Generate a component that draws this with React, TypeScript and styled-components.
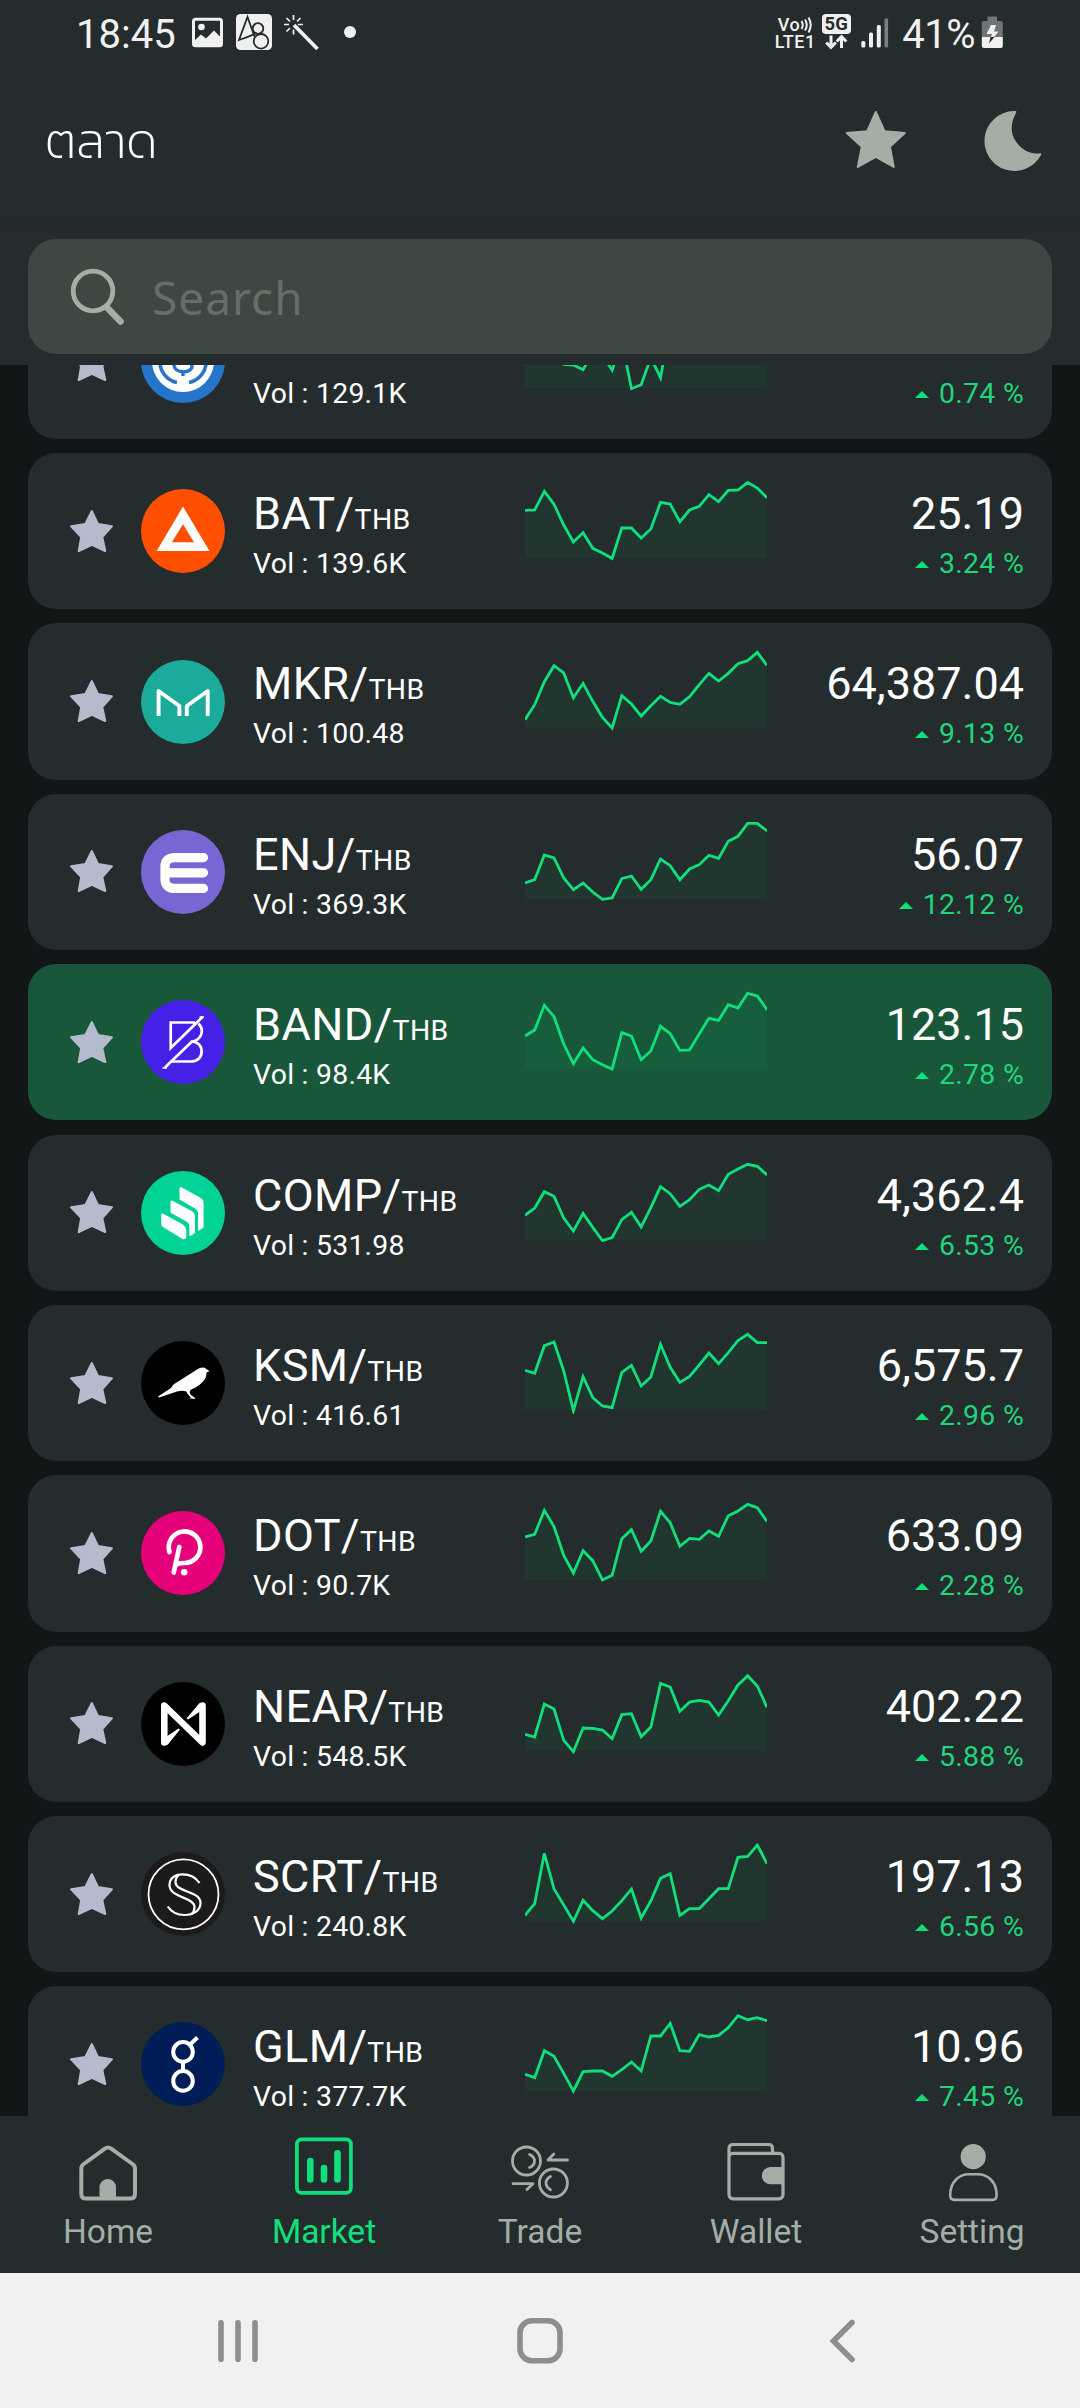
import React from 'react';
import styled, { createGlobalStyle } from 'styled-components';

const c = {
  surface: '#252c2e',
  backdrop: '#121616',
  field: '#3f4743',
  muted: '#a4aea7',
  star: '#b5bacd',
  green: '#0ee17b',
  active: '#19573b',
};

const GlobalStyle = createGlobalStyle`
  * { box-sizing: border-box; }
  body { margin: 0; background: ${c.backdrop}; font-family: Roboto, "Noto Sans", "Liberation Sans", sans-serif; }
  svg { display: block; flex: none; }
`;

const Screen = styled.div`
  width: 1080px;
  height: 2408px;
  display: flex;
  flex-direction: column;
  overflow: hidden;
  background: ${c.backdrop};
`;

const StatusBar = styled.div`
  height: 66px;
  flex: none;
  display: flex;
  justify-content: space-between;
  align-items: flex-start;
  padding: 0 77px 0 76px;
  background: ${c.surface};
  color: #f0f0f0;
`;

const StatusGroup = styled.div`
  display: flex;
  align-items: flex-start;
`;

const StatusText = styled.span<{ $tight?: boolean }>`
  font-size: 40px;
  line-height: 47px;
  padding-top: 11px;
  letter-spacing: ${(p) => (p.$tight ? '-0.5px' : '0')};
`;

const Network = styled.div`
  display: flex;
  flex-direction: column;
  padding-top: 16px;
  font-size: 18px;
  font-weight: 500;
  line-height: 17px;
  letter-spacing: 0.5px;
`;

const Volte = styled.span`
  display: flex;
  align-items: center;
  padding-left: 3px;
`;

const FiveG = styled.div`
  display: flex;
  flex-direction: column;
  align-items: center;
  margin: 14px 10.5px 0 6px;
`;

const FiveGBadge = styled.span`
  width: 29px;
  height: 20px;
  border-radius: 4px;
  background: #f0f0f0;
  color: ${c.surface};
  font-size: 18.5px;
  font-weight: 700;
  line-height: 21px;
  text-align: center;
`;

const AppBar = styled.header`
  height: 152px;
  flex: none;
  display: flex;
  justify-content: space-between;
  align-items: flex-start;
  padding: 44px 36px 0 45px;
  background: ${c.surface};
`;

const Title = styled.h1`
  margin: 1px 0 0;
  color: #fff;
  font-family: Kanit, "Noto Sans Thai", "Noto Sans", sans-serif;
  font-weight: 270;
  font-size: 49.5px;
  line-height: 60px;
`;

const Actions = styled.div`
  display: flex;
  gap: 77px;
`;

const SearchArea = styled.div`
  height: 147px;
  flex: none;
  padding: 21px 28px 0;
  background: linear-gradient(#25292c 0, #25292b 10px, ${c.surface} 18px);
`;

const SearchBox = styled.div`
  height: 115px;
  display: flex;
  align-items: center;
  gap: 26px;
  padding: 1px 42px 0;
  border-radius: 28px;
  background: ${c.field};
`;

const Placeholder = styled.span`
  color: #646e6a;
  font-family: "Noto Sans", sans-serif;
  font-weight: 400;
  font-size: 46px;
  line-height: 60px;
  letter-spacing: 1px;
`;

const Viewport = styled.main`
  flex: 1;
  min-height: 0;
  overflow: hidden;
`;

const List = styled.div`
  display: flex;
  flex-direction: column;
  gap: 14.06px;
  padding: 0 28px;
  margin-top: -82.21px;
`;

const Card = styled.article<{ $active?: boolean }>`
  height: 156.3px;
  flex: none;
  display: grid;
  grid-template-columns: 43px 84px 244px 242px 1fr;
  column-gap: 28px;
  padding: 0 28px 0 42px;
  border-radius: 28px;
  background: ${(p) => (p.$active ? c.active : c.surface)};
`;

const Middle = styled.div`
  display: flex;
  align-items: center;
`;

const Column = styled.div<{ $end?: boolean }>`
  display: flex;
  flex-direction: column;
  align-items: ${(p) => (p.$end ? 'flex-end' : 'flex-start')};
  gap: 7px;
  padding-top: 34px;
  white-space: nowrap;
`;

const Big = styled.div`
  height: 53px;
  color: #fff;
  font-size: 45px;
  line-height: 53px;
`;

const Pairing = styled(Big)`
  letter-spacing: 0.4px;
`;

const Quote = styled.span`
  font-size: 28.4px;
  line-height: 1;
  letter-spacing: 0.4px;
`;

const Volume = styled.div`
  color: #fff;
  font-size: 28.4px;
  line-height: 33px;
  letter-spacing: 0.25px;
`;

const Change = styled.div`
  display: flex;
  align-items: center;
  gap: 10px;
  color: #1fd67a;
  font-size: 28.4px;
  line-height: 33px;
  letter-spacing: 0.3px;
`;

const UpMark = styled.span`
  width: 0;
  height: 0;
  margin-top: 2px;
  border: 7px solid transparent;
  border-top-width: 0;
  border-bottom-color: ${c.green};
`;

const ChartSlot = styled.div`
  padding-top: 27px;
`;

const TabBar = styled.nav`
  height: 157px;
  flex: none;
  display: grid;
  grid-template-columns: repeat(5, 1fr);
  background: ${c.surface};
`;

const Tab = styled.div<{ $active?: boolean }>`
  display: flex;
  flex-direction: column;
  align-items: center;
  padding-top: 20px;
  gap: 8px;
  color: ${(p) => (p.$active ? c.green : c.muted)};
  font-size: 33.5px;
  line-height: 40px;
`;

const SystemNav = styled.div`
  height: 135px;
  flex: none;
  display: grid;
  grid-template-columns: repeat(3, 302.500px);
  justify-content: center;
  justify-items: center;
  padding-top: 44px;
  background: #f1f1f1;
`;

type Pair = {
  symbol?: string;
  volume: string;
  price?: string;
  change: string;
  color: string;
  active?: boolean;
  logo: React.ReactNode;
  // Distance below the top of the plot, in thirds of a pixel.
  series: number[];
};

const pairs: Pair[] = [
  {
    volume: '129.1K', change: '0.74', color: '#2775ca',
    series: [157, 140, 100, 140, 157, 159, 173, 120, 130, 174, 88, 230, 218, 137, 197, 36, 50, 40, 60, 45, 30, 40, 20, 10, 1, 20],
    logo: (
      <g fill="none" stroke="#2775ca">
        <circle cx="42" cy="42" r="31" fill="#fff" stroke="none" />
        <path d="M36 63.5A22 22 0 0 1 36 20.500M48 63.500A22 22 0 0 0 48 20.500" strokeWidth="3.600" />
        <path d="M50.500 36C50.500 27 33.500 27 33.500 36C33.500 44 51 40 51 47C51 55 33 55 33 45.500M42 25V30M42 53V57" strokeWidth="3.400" />
      </g>
    ),
  },
  {
    symbol: 'BAT', volume: '139.6K', price: '25.19', change: '3.24', color: '#ff5000',
    series: [85, 84, 28, 67, 129, 180, 152, 199, 213, 229, 138, 138, 168, 141, 61, 66, 119, 84, 73, 38, 59, 25, 24, 1, 18, 47],
    logo: <path fill="#fff" fillRule="evenodd" d="M42 17.500L68.500 62H15.700ZM42 35.300L30.800 53.300H53Z" />,
  },
  {
    symbol: 'MKR', volume: '100.48', price: '64,387.04', change: '9.13', color: '#1aab9b',
    series: [203, 158, 89, 41, 63, 137, 94, 148, 196, 228, 131, 156, 192, 161, 133, 151, 157, 134, 98, 64, 87, 64, 35, 26, 1, 40],
    logo: <path d="M17.600 56V31L38.400 46V56M66.700 56V31L45.800 46V56" fill="none" stroke="#fff" strokeWidth="3.900" strokeLinejoin="round" />,
  },
  {
    symbol: 'ENJ', volume: '369.3K', price: '56.07', change: '12.12', color: '#7866d5',
    series: [180, 170, 96, 105, 165, 200, 180, 207, 229, 225, 167, 159, 199, 170, 108, 128, 170, 138, 125, 97, 106, 55, 40, 1, 1, 24],
    logo: <path d="M62.500 27.600H34Q24 27.600 24 37V49Q24 58.400 34 58.400H62.500M26 42.800H62.500" fill="none" stroke="#fff" strokeWidth="9.200" strokeLinecap="round" />,
  },
  {
    symbol: 'BAND', volume: '98.4K', price: '123.15', change: '2.78', color: '#4520e6', active: true,
    series: [129, 111, 37, 71, 153, 212, 165, 200, 215, 228, 119, 129, 200, 174, 100, 122, 172, 171, 123, 76, 82, 35, 45, 1, 9, 50],
    logo: (
      <g fill="none" stroke="#fff" strokeWidth="2.700">
        <path d="M61.500 17L29.700 48V22.500H54" />
        <path d="M57.500 23.500C64.500 31 59.500 40.500 50.500 41.500C57 41.500 60.600 46 60.600 51.500S57 61.500 50 61.500H31" />
        <path d="M51.500 41L24 67.500" />
        <path d="M58.500 17H63M21.500 68H26" strokeWidth="1.500" />
      </g>
    ),
  },
  {
    symbol: 'COMP', volume: '531.98', price: '4,362.4', change: '6.53', color: '#00d395',
    series: [154, 132, 83, 97, 162, 201, 148, 190, 230, 221, 167, 145, 189, 131, 68, 89, 127, 107, 76, 63, 80, 31, 15, 1, 7, 33],
    logo: (
      <g fill="#fff" stroke="#fff" strokeWidth="2" strokeLinejoin="round">
        <path d="M39.500 17L58.500 27.500Q61.600 29 61.600 32.500V56L58 58.500V42Q58 38.500 55 37L39.500 28Z" />
        <path d="M30.500 30.500L50 41Q53 42.700 53 46V61.500L49.300 64V54.500Q49 51 46 49.500L30.500 41Z" />
        <path d="M21.200 43.500L41.500 54.500Q44 56 44.300 59V66.500L42.500 67.300L22.800 55.300Q21.200 54.300 21.200 52.500Z" />
      </g>
    ),
  },
  {
    symbol: 'KSM', volume: '416.61', price: '6,575.7', change: '2.96', color: '#000',
    series: [109, 118, 35, 24, 111, 230, 128, 191, 216, 221, 115, 94, 156, 129, 31, 100, 145, 127, 93, 57, 89, 56, 20, 1, 26, 26],
    logo: <path fill="#fff" d="M17 55.500L30 47L32.500 43.500L45 35.500L56 28.500Q61.500 25 65.500 28L68.500 30.300L65.500 31.500Q65.500 37 62 40.500Q57 46 50.500 48.300Q47.500 50 49.500 53.500L54 57V58L48.500 57.200L50 56.500Q46 53 45.500 50.500Q41 49 36 50.500L18 56.500Z" />,
  },
  {
    symbol: 'DOT', volume: '90.7K', price: '633.09', change: '2.28', color: '#e6007a',
    series: [99, 91, 19, 68, 154, 207, 140, 170, 228, 214, 104, 77, 142, 111, 22, 56, 127, 103, 106, 81, 97, 35, 21, 1, 11, 52],
    logo: (
      <g fill="none" stroke="#fff" strokeWidth="4.700" strokeLinecap="round">
        <path d="M28.500 41A15.800 15.800 0 1 1 42.900 52Q36 52 34.500 55M38.300 36L32.700 61.500" />
        <circle cx="43.200" cy="61.300" r="3.300" fill="#fff" stroke="none" />
      </g>
    ),
  },
  {
    symbol: 'NEAR', volume: '548.5K', price: '402.22', change: '5.88', color: '#000',
    series: [178, 186, 87, 102, 196, 230, 159, 160, 165, 191, 119, 116, 185, 156, 25, 36, 109, 81, 76, 81, 120, 77, 30, 2, 33, 97],
    logo: (
      <g fill="#fff">
        <path d="M23.300 60.500V23.500L61.500 60.500V23.500" fill="none" stroke="#fff" strokeWidth="6.600" strokeLinecap="round" strokeLinejoin="round" />
        <path d="M58.500 21L45.500 36.500L47 37.500L63 27ZM26.500 63L39 47.500L37.500 46.500L22 57Z" />
      </g>
    ),
  },
  {
    symbol: 'SCRT', volume: '240.8K', price: '197.13', change: '6.56', color: '#1b1b1b',
    series: [211, 176, 25, 132, 180, 229, 166, 197, 221, 198, 167, 132, 219, 168, 100, 86, 211, 191, 191, 161, 131, 131, 37, 34, 0, 56],
    logo: (
      <g fill="none" stroke="#fff" strokeWidth="2.200">
        <circle cx="42.500" cy="42.300" r="35" strokeWidth="1.800" />
        <path d="M58.500 31C54 24 48 22.300 41.500 22.300C33 22.300 28.500 27 28.500 33C28.500 46 53.500 45 53.500 55Q53.500 59.500 50.500 62" />
        <path d="M26.800 54.500C31 61 37 63 43.500 63C53 63 59.500 58 59.500 51C59.500 38.500 34.500 40.500 34.500 30Q34.500 26 37.500 23" />
      </g>
    ),
  },
  {
    symbol: 'GLM', volume: '377.7K', price: '10.96', change: '7.45', color: '#001d57',
    series: [178, 188, 107, 124, 175, 228, 170, 168, 168, 184, 164, 141, 168, 63, 63, 25, 107, 109, 59, 66, 61, 38, 2, 14, 8, 17],
    logo: (
      <g fill="none" stroke="#fff" strokeWidth="4">
        <circle cx="42" cy="29.900" r="9.800" />
        <circle cx="42" cy="58.900" r="9.800" />
        <path d="M42 39.500V49M48.500 23L56.500 15.500" />
      </g>
    ),
  },
];

const Sparkline = ({ series }: { series: number[] }) => {
  const line = series.map((v, i) => `${((i * 242) / 25).toFixed(2)},${(v / 3 + 2).toFixed(2)}`).join(' ');
  return (
    <svg width="242" height="82" viewBox="0 0 242 82">
      <polygon points={`0,78 ${line} 242,78`} fill="rgba(0,220,80,0.06)" />
      <polyline points={line} fill="none" stroke={c.green} strokeWidth="2.800" />
    </svg>
  );
};

const RowStar = () => (
  <svg width="43" height="43" viewBox="0 0 43 43">
    <path
      d="M21.800 1.200L28 14.200L41.800 16.300L32.200 27L35.200 41L21.800 34.800L8.800 41L11.300 27L1.200 16.300L15.300 14.200Z"
      fill={c.star} stroke={c.star} strokeWidth="2.200" strokeLinejoin="round"
    />
  </svg>
);

const tabs: { label: string; active?: boolean; icon: React.ReactNode }[] = [
  {
    label: 'Home',
    icon: (
      <g strokeWidth="4">
        <path d="M28.500 12.800Q32 10.300 35.500 12.800L56.500 28Q59 29.800 59 32.500V57.700Q59 62.500 54.300 62.500H10Q5.300 62.500 5.300 57.700V32.500Q5.300 29.800 7.800 28Z" />
        <path d="M23.500 62.500V50.500A8.300 8.300 0 0 1 40 50.500V62.500Z" fill="currentColor" stroke="none" />
      </g>
    ),
  },
  {
    label: 'Market', active: true,
    icon: (
      <g>
        <rect x="4.900" y="3.400" width="54" height="53.400" rx="4.500" strokeWidth="3.700" />
        <path d="M18.300 25V43.500M32 32V43.500M45.500 17.200V43.500" strokeWidth="6.600" strokeLinecap="round" />
      </g>
    ),
  },
  {
    label: 'Trade',
    icon: (
      <g strokeWidth="2.800" strokeLinecap="round" strokeLinejoin="round">
        <circle cx="18.500" cy="25" r="14" />
        <circle cx="45.400" cy="47" r="14" />
        <path d="M21.500 18.500Q26.500 20.500 26.500 25T21.500 31.500M42.500 40.500Q38 43 38 47T42.500 53.800M59.500 24H40L45.800 18M5 47.700H25L19 53.500" />
      </g>
    ),
  },
  {
    label: 'Wallet',
    icon: (
      <g strokeWidth="3.200">
        <rect x="5" y="17.300" width="54" height="45.500" rx="4" />
        <path d="M5 20V12.500Q5 8.500 9 8.500H44.500Q48.500 8.500 48.500 12.500V17" />
        <path d="M59 31V48.300H46.500A8.600 8.600 0 0 1 46.500 31Z" fill="currentColor" stroke="none" />
      </g>
    ),
  },
  {
    label: 'Setting',
    icon: (
      <g strokeWidth="2.600">
        <circle cx="33.200" cy="20.700" r="12.600" fill="currentColor" stroke="none" />
        <path d="M14.500 63.900Q10.200 63.900 10.200 59C10.200 46 19 38.300 29 38.300H37.500C48 38.300 56.600 46 56.600 59Q56.600 63.900 52.500 63.900Z" />
      </g>
    ),
  },
];

const App = () => (
  <Screen>
    <GlobalStyle />
    <StatusBar>
      <StatusGroup>
        <StatusText>18:45</StatusText>
        <svg width="180" height="52" viewBox="176 0 180 52" fill="none">
          <rect x="193.500" y="19.200" width="28" height="26.500" rx="2" stroke="#f0f0f0" strokeWidth="3" />
          <circle cx="201.500" cy="27" r="3.300" fill="#f0f0f0" />
          <path d="M194 41L201 34.500L206 38.500L214 30.500L222 38.500V46H194Z" fill="#f0f0f0" />
          <rect x="236" y="14" width="36" height="36" rx="4.500" fill="#f0f0f0" />
          <g stroke={c.surface} strokeWidth="1.800">
            <path d="M254.500 36.500L247.500 17L239 40Q248 37 257 33" />
            <circle cx="258" cy="28.500" r="5.300" />
            <circle cx="261" cy="41.300" r="7.300" />
          </g>
          <path d="M294 25L317.500 49" stroke="#f0f0f0" strokeWidth="3.800" />
          <path d="M293.500 15V20M293.500 29.500V34.500M284 24.500H289M298 24.500H303M286.500 18L290 21.500M300.500 18L297 21.500M286.500 31.500L290 28" stroke="#f0f0f0" strokeWidth="1.700" />
          <circle cx="350" cy="32" r="6" fill="#f0f0f0" />
        </svg>
      </StatusGroup>
      <StatusGroup>
        <Network>
          <Volte>
            Vo
            <svg width="13" height="16" viewBox="0 0 13 16" fill="none" stroke="#f0f0f0" strokeWidth="2">
              <path d="M1.500 4Q4 8 1.500 12M5 2.500Q8.500 8 5 13.500M8.500 0.500Q13 8 8.500 15.500" />
            </svg>
          </Volte>
          <span>LTE1</span>
        </Network>
        <FiveG>
          <FiveGBadge>5G</FiveGBadge>
          <svg width="24" height="16" viewBox="0 0 24 16" fill="none" stroke="#f0f0f0" strokeWidth="3">
            <path d="M7 1.500V13M2.200 8.500L7 13.300L11.800 8.500M17.500 14V3M12.700 7.500L17.500 2.700L22.300 7.500" />
          </svg>
        </FiveG>
        <svg width="41" height="52" viewBox="862 0 41 52" fill="#f0f0f0">
          <rect x="862.300" y="41" width="4" height="6.500" rx="1.500" />
          <rect x="870" y="32.500" width="4" height="15" rx="1.500" />
          <rect x="877.800" y="25" width="4" height="22.500" rx="1.500" />
          <rect x="885.500" y="18.300" width="3.600" height="29.200" rx="1.500" fill="#7b8081" />
        </svg>
        <StatusText $tight>41%</StatusText>
        <svg width="28" height="52" viewBox="975 0 28 52">
          <path d="M987.500 16.500H997V21H1001Q1002.800 21 1002.800 23V37H981.800V23Q981.800 21 984 21H987.500Z" fill="#6f7475" />
          <path d="M981.800 37H1002.800V46Q1002.800 48 1001 48H984Q981.800 48 981.800 46Z" fill="#f0f0f0" />
          <path d="M991 25H996L994 31.500H998.500L994 37H991L992 34H986.500Z" fill="#f0f0f0" />
          <path d="M990.500 37H994.500L989 43.500Z" fill={c.surface} />
        </svg>
      </StatusGroup>
    </StatusBar>
    <AppBar>
      <Title>ตลาด</Title>
      <Actions>
        <svg width="62" height="60" viewBox="0 0 62 60">
          <path d="M30.800 2L39.500 21.200L59.800 23L44.900 36.800L48.800 57L30.800 46.800L12.800 57L16.800 36.800L1.800 23L22.200 21.200Z" fill={c.muted} stroke={c.muted} strokeWidth="2" strokeLinejoin="round" />
        </svg>
        <svg width="60" height="62" viewBox="0 0 60 62">
          <path d="M31.500 1Q33 1 32 3C26 14 26.500 24 32 31.500C37 39 45 44.500 56 43.200Q58 43 57 45A30 30 0 1 1 29.500 1Z" fill={c.muted} />
        </svg>
      </Actions>
    </AppBar>
    <SearchArea>
      <SearchBox>
        <svg width="56" height="60" viewBox="70 266 56 60" fill="none" stroke={c.muted}>
          <circle cx="93" cy="290" r="19.800" strokeWidth="4.800" />
          <path d="M107 306.500L120.500 320.500" strokeWidth="6.600" strokeLinecap="round" />
        </svg>
        <Placeholder>Search</Placeholder>
      </SearchBox>
    </SearchArea>
    <Viewport>
      <List>
        {pairs.map((p) => (
          <Card key={p.volume} $active={p.active}>
            <Middle><RowStar /></Middle>
            <Middle>
              <svg width="84" height="84" viewBox="0 0 84 84">
                <circle cx="42" cy="42" r="42" fill={p.color} />
                {p.logo}
              </svg>
            </Middle>
            <Column>
              <Pairing>{p.symbol && <>{p.symbol}/<Quote>THB</Quote></>}</Pairing>
              <Volume>Vol : {p.volume}</Volume>
            </Column>
            <ChartSlot><Sparkline series={p.series} /></ChartSlot>
            <Column $end>
              <Big>{p.price}</Big>
              <Change><UpMark />{p.change} %</Change>
            </Column>
          </Card>
        ))}
      </List>
    </Viewport>
    <TabBar>
      {tabs.map((t) => (
        <Tab key={t.label} $active={t.active}>
          <svg width="64" height="68" viewBox="0 0 64 68" fill="none" stroke="currentColor">{t.icon}</svg>
          {t.label}
        </Tab>
      ))}
    </TabBar>
    <SystemNav>
      <svg width="46" height="50" viewBox="215 2317 46 50" fill="none" stroke="#8e8e8e" strokeWidth="5.600" strokeLinecap="round">
        <path d="M221 2322.800V2359.200M238 2322.800V2359.200M255 2322.800V2359.200" />
      </svg>
      <svg width="50" height="50" viewBox="515 2317 50 50" fill="none" stroke="#8e8e8e" strokeWidth="5.600">
        <rect x="520" y="2320.800" width="40" height="40" rx="12" />
      </svg>
      <svg width="30" height="50" viewBox="828 2317 30 50" fill="none" stroke="#8e8e8e" strokeWidth="5.600" strokeLinecap="round">
        <path d="M852 2322.500L833.500 2341L852 2359.500" />
      </svg>
    </SystemNav>
  </Screen>
);

export default App;
